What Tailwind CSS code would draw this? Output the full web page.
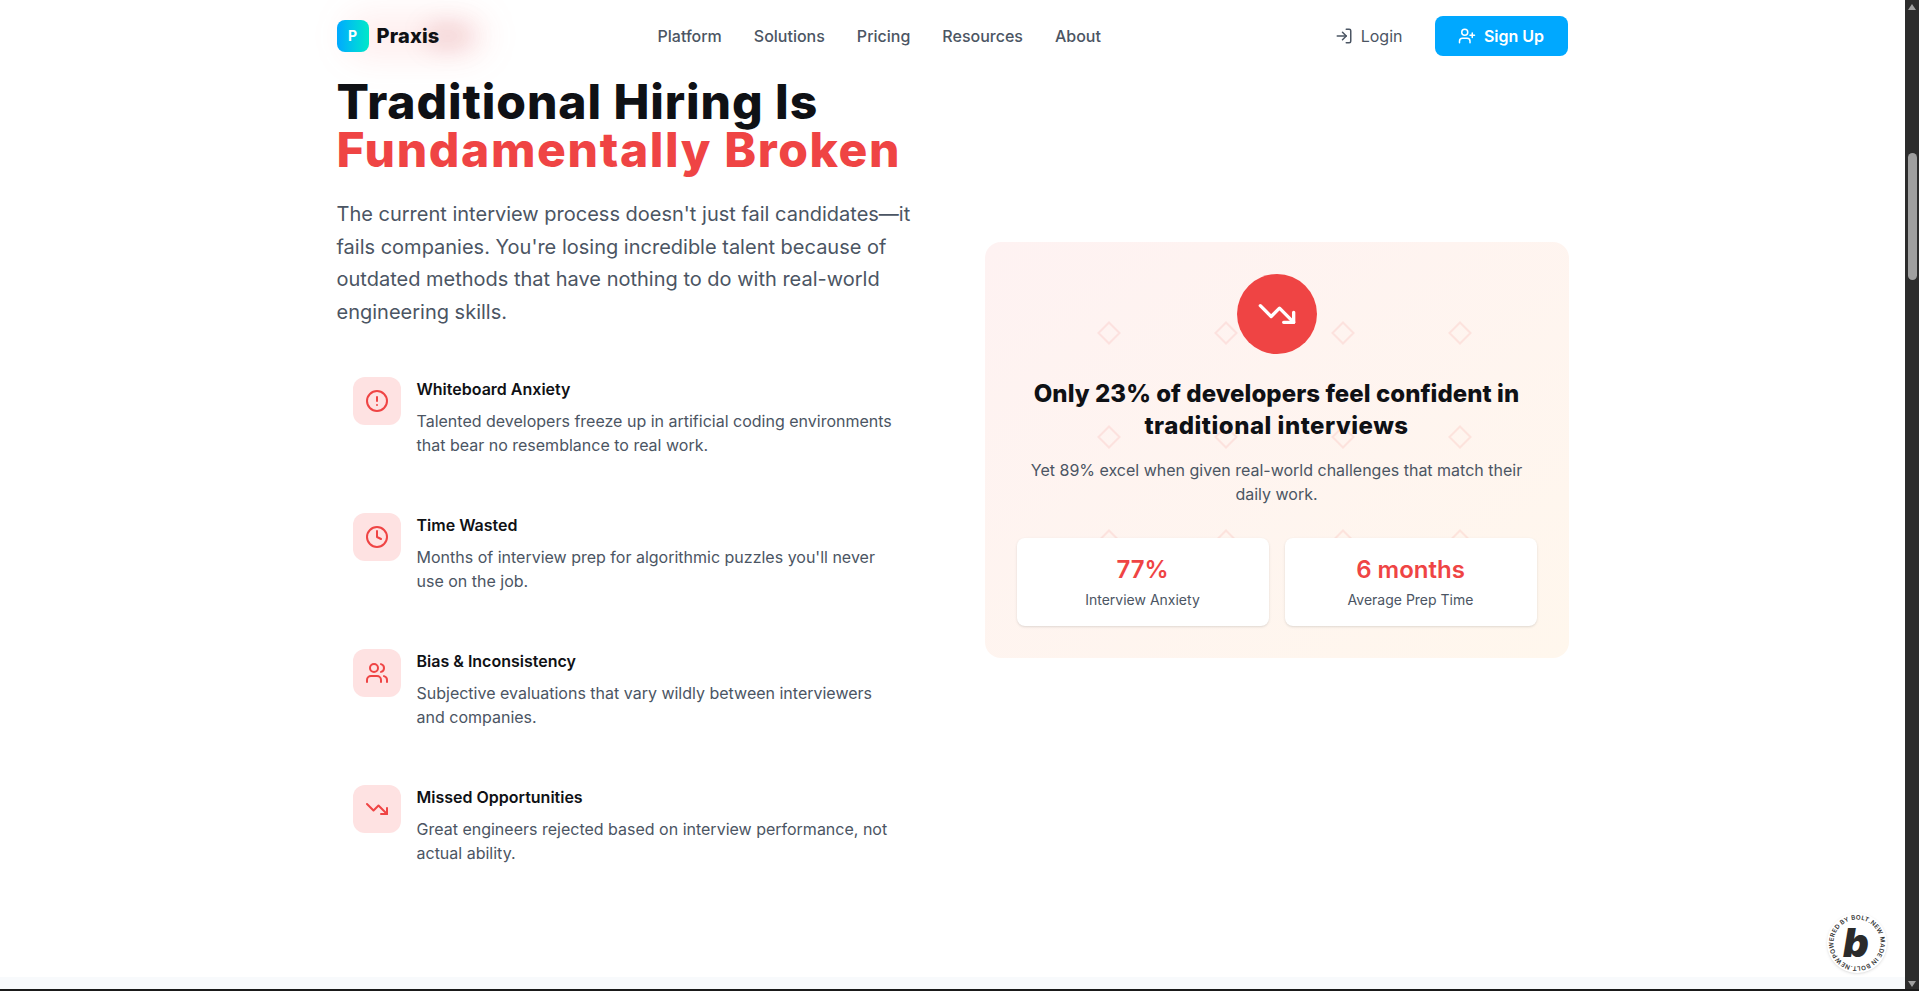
<!DOCTYPE html>
<html lang="en">
<head>
    <meta charset="UTF-8">
    <meta name="viewport" content="width=device-width, initial-scale=1.0">
    <title>Praxis</title>
    <script src="https://cdn.jsdelivr.net/npm/@tailwindcss/browser@4"></script>
</head>
<body class="h-screen overflow-hidden bg-white font-[Inter,sans-serif] text-[#0f1115]">
<div class="flex h-[989px]">
    <!-- Page -->
    <div class="relative flex-1 min-w-0 flex flex-col overflow-hidden">
        <header class="h-[72px] shrink-0">
            <nav class="relative mx-auto flex h-full max-w-[1280px] items-center justify-between px-6">
                <div class="absolute left-[30px] top-[13px] h-[46px] w-[145px] rounded-full bg-red-400/10 blur-lg"></div>
                <div class="absolute left-[112px] top-[25px] h-[22px] w-[46px] rounded-full bg-red-800/15 blur-md"></div>
                <a href="#" class="relative flex items-center gap-2">
                    <span class="flex h-8 w-8 items-center justify-center rounded-lg bg-gradient-to-r from-[#00a8ff] to-[#00e8c8] text-sm font-bold text-white">P</span>
                    <span class="text-xl font-extrabold tracking-[0.2px]">Praxis</span>
                </a>
                <div class="absolute left-[345px] flex items-center gap-8 text-base text-[#4b5563]">
                    <a href="#" class="font-medium">Platform</a>
                    <a href="#" class="font-medium">Solutions</a>
                    <a href="#" class="font-medium">Pricing</a>
                    <a href="#" class="font-medium">Resources</a>
                    <a href="#" class="font-medium">About</a>
                </div>
                <div class="ml-auto mr-px flex items-center gap-4">
                    <a href="#" class="flex items-center gap-2 px-4 py-2 text-[#4b5563]">
                        <svg class="h-[18px] w-[18px]" viewBox="0 0 24 24" fill="none" stroke="currentColor" stroke-width="2" stroke-linecap="round" stroke-linejoin="round"><path d="M15 3h4a2 2 0 0 1 2 2v14a2 2 0 0 1-2 2h-4"/><polyline points="10 17 15 12 10 7"/><line x1="15" y1="12" x2="3" y2="12"/></svg>
                        Login
                    </a>
                    <a href="#" class="flex h-10 w-[133px] items-center justify-center gap-2 rounded-lg bg-[#00a8ff] font-semibold text-white">
                        <svg class="h-[18px] w-[18px]" viewBox="0 0 24 24" fill="none" stroke="currentColor" stroke-width="2" stroke-linecap="round" stroke-linejoin="round"><path d="M16 21v-2a4 4 0 0 0-4-4H6a4 4 0 0 0-4 4v2"/><circle cx="9" cy="7" r="4"/><line x1="19" y1="8" x2="19" y2="14"/><line x1="22" y1="11" x2="16" y2="11"/></svg>
                        Sign Up
                    </a>
                </div>
            </nav>
        </header>

        <main class="mx-auto grid w-full max-w-[1280px] flex-1 grid-cols-2 items-start gap-16 px-6 pt-[6px]">
            <!-- Left column -->
            <div>
                <h1 class="mb-6 text-5xl/12 font-extrabold">
                    <span class="block tracking-[0.92px]">Traditional Hiring Is</span>
                    <span class="block tracking-[1.63px] text-[#ef4444]">Fundamentally Broken</span>
                </h1>
                <p class="mb-[33px] text-xl/[32.5px] text-[#4b5563]">The current interview process doesn't just fail candidates—it fails companies. You're losing incredible talent because of outdated methods that have nothing to do with real-world engineering skills.</p>

                <div class="space-y-6">
                    <div class="flex gap-4 p-4">
                        <div class="flex h-12 w-12 shrink-0 items-center justify-center rounded-xl bg-[#fee2e2] text-[#ef4444]">
                            <svg class="h-6 w-6" viewBox="0 0 24 24" fill="none" stroke="currentColor" stroke-width="2" stroke-linecap="round" stroke-linejoin="round"><circle cx="12" cy="12" r="10"/><line x1="12" y1="8" x2="12" y2="12"/><line x1="12" y1="16" x2="12.01" y2="16"/></svg>
                        </div>
                        <div>
                            <h3 class="mb-2 text-base font-semibold">Whiteboard Anxiety</h3>
                            <p class="text-base/6 text-[#4b5563]">Talented developers freeze up in artificial coding environments that bear no resemblance to real work.</p>
                        </div>
                    </div>
                    <div class="flex gap-4 p-4">
                        <div class="flex h-12 w-12 shrink-0 items-center justify-center rounded-xl bg-[#fee2e2] text-[#ef4444]">
                            <svg class="h-6 w-6" viewBox="0 0 24 24" fill="none" stroke="currentColor" stroke-width="2" stroke-linecap="round" stroke-linejoin="round"><circle cx="12" cy="12" r="10"/><polyline points="12 6 12 12 16 14"/></svg>
                        </div>
                        <div>
                            <h3 class="mb-2 text-base font-semibold">Time Wasted</h3>
                            <p class="text-base/6 text-[#4b5563]">Months of interview prep for algorithmic puzzles you'll never use on the job.</p>
                        </div>
                    </div>
                    <div class="flex gap-4 p-4">
                        <div class="flex h-12 w-12 shrink-0 items-center justify-center rounded-xl bg-[#fee2e2] text-[#ef4444]">
                            <svg class="h-6 w-6" viewBox="0 0 24 24" fill="none" stroke="currentColor" stroke-width="2" stroke-linecap="round" stroke-linejoin="round"><path d="M16 21v-2a4 4 0 0 0-4-4H6a4 4 0 0 0-4 4v2"/><circle cx="9" cy="7" r="4"/><path d="M22 21v-2a4 4 0 0 0-3-3.87"/><path d="M16 3.13a4 4 0 0 1 0 7.75"/></svg>
                        </div>
                        <div>
                            <h3 class="mb-2 text-base font-semibold">Bias &amp; Inconsistency</h3>
                            <p class="text-base/6 text-[#4b5563]">Subjective evaluations that vary wildly between interviewers and companies.</p>
                        </div>
                    </div>
                    <div class="flex gap-4 p-4">
                        <div class="flex h-12 w-12 shrink-0 items-center justify-center rounded-xl bg-[#fee2e2] text-[#ef4444]">
                            <svg class="h-6 w-6" viewBox="0 0 24 24" fill="none" stroke="currentColor" stroke-width="2" stroke-linecap="round" stroke-linejoin="round"><polyline points="22 17 13.5 8.5 8.5 13.5 2 7"/><polyline points="16 17 22 17 22 11"/></svg>
                        </div>
                        <div>
                            <h3 class="mb-2 text-base font-semibold">Missed Opportunities</h3>
                            <p class="text-base/6 text-[#4b5563]">Great engineers rejected based on interview performance, not actual ability.</p>
                        </div>
                    </div>
                </div>
            </div>

            <!-- Right card -->
            <div class="relative mt-[164px] overflow-hidden rounded-2xl bg-gradient-to-br from-[#fef2f2] to-[#fff7ed] p-8 text-center">
                <svg class="absolute inset-0 h-full w-full" fill="none" stroke="#ef4444" stroke-opacity="0.1" stroke-width="2">
                    <path d="M124 80.5l10.5 10.5-10.5 10.5-10.5-10.5z"/><path d="M241 80.5l10.5 10.5-10.5 10.5-10.5-10.5z"/><path d="M358 80.5l10.5 10.5-10.5 10.5-10.5-10.5z"/><path d="M475 80.5l10.5 10.5-10.5 10.5-10.5-10.5z"/>
                    <path d="M124 184.5l10.5 10.5-10.5 10.5-10.5-10.5z"/><path d="M241 184.5l10.5 10.5-10.5 10.5-10.5-10.5z"/><path d="M358 184.5l10.5 10.5-10.5 10.5-10.5-10.5z"/><path d="M475 184.5l10.5 10.5-10.5 10.5-10.5-10.5z"/>
                    <path d="M124 288.5l10.5 10.5-10.5 10.5-10.5-10.5z"/><path d="M241 288.5l10.5 10.5-10.5 10.5-10.5-10.5z"/><path d="M358 288.5l10.5 10.5-10.5 10.5-10.5-10.5z"/><path d="M475 288.5l10.5 10.5-10.5 10.5-10.5-10.5z"/>
                </svg>
                <div class="relative">
                    <div class="mx-auto mb-6 flex h-20 w-20 items-center justify-center rounded-full bg-[#ef4444] text-white">
                        <svg class="h-10 w-10" viewBox="0 0 24 24" fill="none" stroke="currentColor" stroke-width="2" stroke-linecap="round" stroke-linejoin="round"><polyline points="22 17 13.5 8.5 8.5 13.5 2 7"/><polyline points="16 17 22 17 22 11"/></svg>
                    </div>
                    <h3 class="mb-4 text-2xl/8 font-extrabold">
                        <span class="block tracking-[0.05px]">Only 23% of developers feel confident in</span>
                        <span class="block tracking-[0.5px]">traditional interviews</span>
                    </h3>
                    <p class="mb-8 text-[#4b5563]">Yet 89% excel when given real-world challenges that match their daily work.</p>
                    <div class="grid grid-cols-2 gap-4">
                        <div class="rounded-lg bg-white p-4 shadow-sm">
                            <div class="text-2xl font-semibold text-[#ef4444]">77%</div>
                            <div class="mt-1 text-sm text-[#4b5563]">Interview Anxiety</div>
                        </div>
                        <div class="rounded-lg bg-white p-4 shadow-sm">
                            <div class="text-2xl font-semibold text-[#ef4444]">6 months</div>
                            <div class="mt-1 text-sm text-[#4b5563]">Average Prep Time</div>
                        </div>
                    </div>
                </div>
            </div>
        </main>

        <div class="h-3 shrink-0 bg-[#f8fafc]"></div>

        <!-- Bolt badge -->
        <div class="absolute right-[18px] bottom-[16px] h-[60px] w-[60px] rounded-full bg-white shadow-sm">
            <svg class="h-full w-full" viewBox="0 0 60 60">
                <defs><path id="badgeCircle" d="M30 30m-23.5 0a23.5 23.5 0 1 1 47 0a23.5 23.5 0 1 1-47 0"/></defs>
                <g transform="rotate(-35 30 30)">
                    <text font-family="Inter, sans-serif" font-size="6.2" font-weight="600" fill="#333"><textPath href="#badgeCircle" textLength="146">POWERED BY BOLT.NEW MADE IN BOLT.NEW </textPath></text>
                </g>
                <text x="29" y="44" text-anchor="middle" font-family="Inter, sans-serif" font-size="40" font-weight="900" font-style="italic" fill="#2b2b2b">b</text>
            </svg>
        </div>
    </div>

    <!-- Scrollbar -->
    <div class="flex w-[14px] shrink-0 flex-col items-center bg-[#2c2c2c]">
        <div class="mt-[4px] h-0 w-0 border-x-[4px] border-b-[6px] border-x-transparent border-b-[#9f9f9f]"></div>
        <div class="mt-[143px] h-[127px] w-[9px] rounded-full bg-[#9f9f9f]"></div>
        <div class="mt-auto mb-[2px] h-0 w-0 border-x-[4px] border-t-[6px] border-x-transparent border-t-[#9f9f9f]"></div>
    </div>
</div>
<div class="h-[2px] bg-[#1a1a1a]"></div>
</body>
</html>
